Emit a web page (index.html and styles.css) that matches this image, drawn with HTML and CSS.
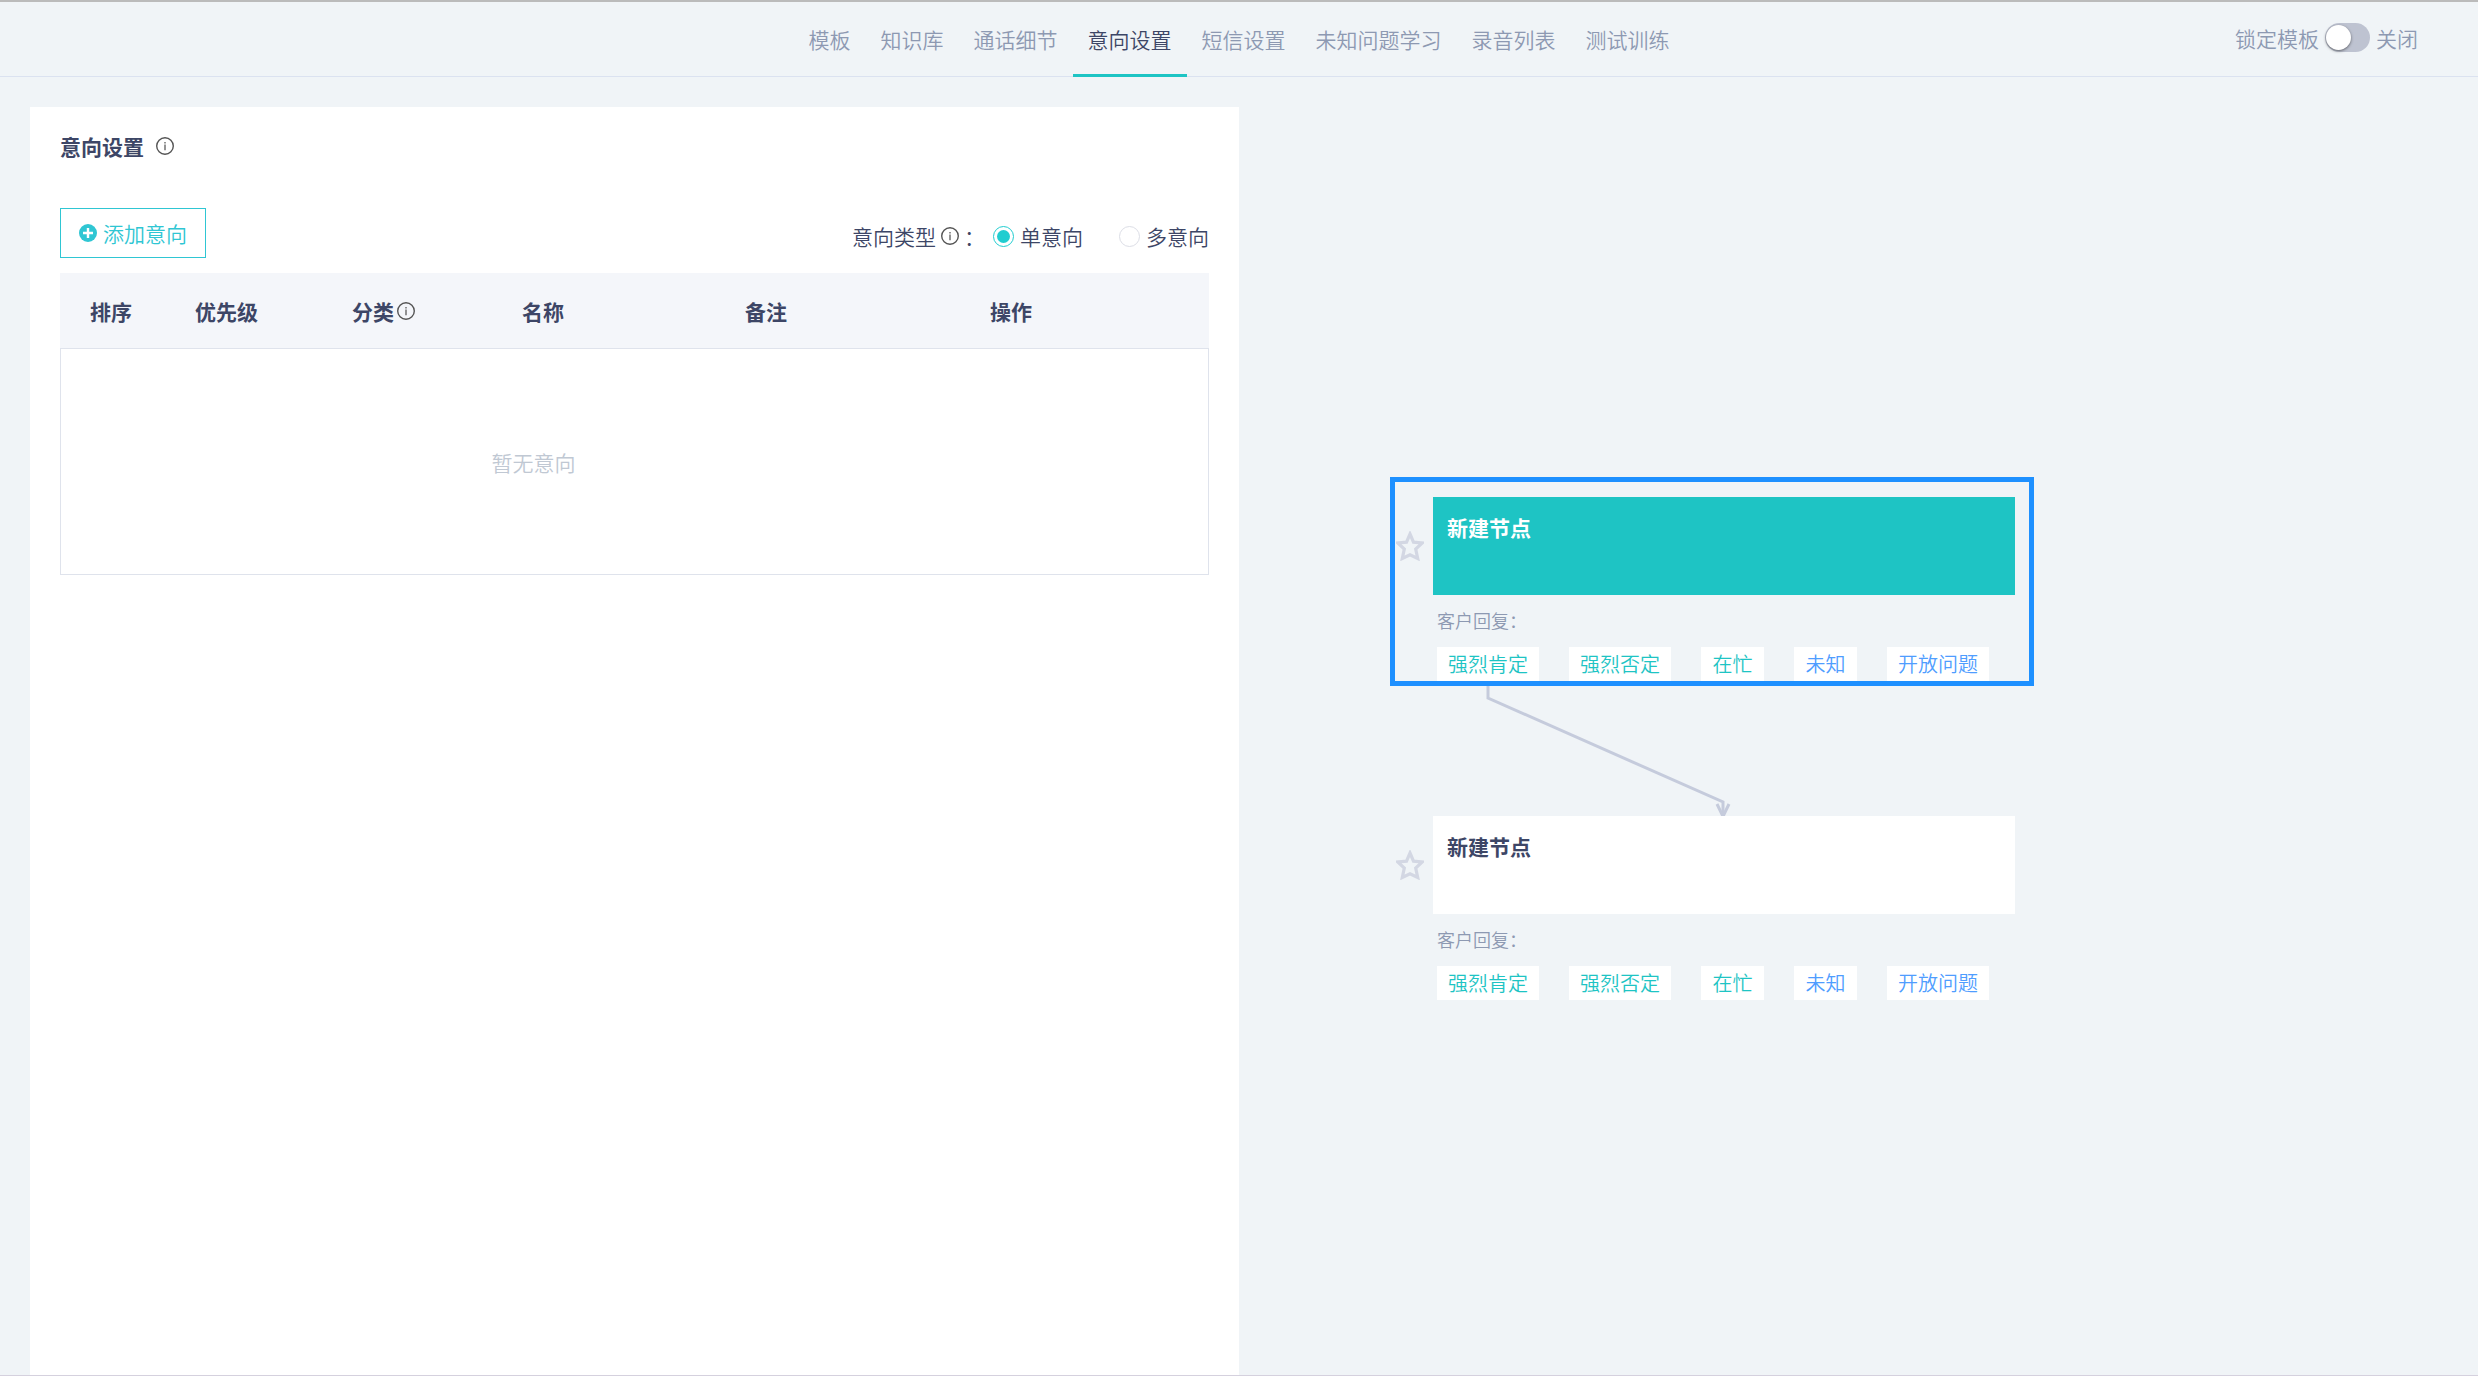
FILE: index.html
```html
<!DOCTYPE html>
<html lang="zh-CN">
<head>
<meta charset="utf-8">
<title>意向设置</title>
<link rel="stylesheet" href="styles.css">
</head>
<body>
<svg class="defs" aria-hidden="true">
  <symbol id="info" viewBox="0 0 18 18">
    <circle cx="9" cy="9" r="8.3" fill="none" stroke="#555" stroke-width="1.4"/>
    <path d="M9 7.6v5.6M9 5v1.4" stroke="#666" stroke-width="1.4"/>
  </symbol>
  <symbol id="star" viewBox="0 0 28 30">
    <path d="M14 3l3.500 8.200 8.700.800-6.500 6 2 9.500-7.700-3.700-7.700 3.700 2-9.500-6.500-6 8.700-.800z" fill="none" stroke="#d3d7e3" stroke-width="3.2"/>
  </symbol>
</svg>

<header class="topbar">
  <nav class="tabs">
    <a class="tab" href="#">模板</a>
    <a class="tab" href="#">知识库</a>
    <a class="tab" href="#">通话细节</a>
    <a class="tab tab-active" href="#">意向设置</a>
    <a class="tab" href="#">短信设置</a>
    <a class="tab" href="#">未知问题学习</a>
    <a class="tab" href="#">录音列表</a>
    <a class="tab" href="#">测试训练</a>
  </nav>
  <label class="lock">
    <span>锁定模板</span>
    <input class="switch" type="checkbox">
    <span>关闭</span>
  </label>
</header>

<main class="workspace">
  <section class="panel">
    <h1 class="panel-title">意向设置 <svg class="info"><use href="#info"/></svg></h1>
    <div class="toolbar">
      <button class="add" type="button">
        <svg class="info" viewBox="0 0 18 18"><circle cx="9" cy="9" r="9" fill="#2fc6d3"/><path d="M9 4v10M4 9h10" stroke="#fff" stroke-width="2.4"/></svg>
        添加意向
      </button>
      <div class="types" role="radiogroup" aria-labelledby="type-label">
        <span class="types-label" id="type-label">意向类型<svg class="info"><use href="#info"/></svg>：</span>
        <label class="choice"><input class="radio" type="radio" name="type" checked>单意向</label>
        <label class="choice"><input class="radio" type="radio" name="type">多意向</label>
      </div>
    </div>
    <table class="intents">
      <colgroup>
        <col class="col-order"><col class="col-priority"><col class="col-class"><col class="col-name"><col class="col-note"><col>
      </colgroup>
      <thead>
        <tr>
          <th>排序</th>
          <th>优先级</th>
          <th><span class="with-icon">分类<svg class="info"><use href="#info"/></svg></span></th>
          <th>名称</th>
          <th>备注</th>
          <th>操作</th>
        </tr>
      </thead>
      <tbody>
        <tr><td class="empty" colspan="6">暂无意向</td></tr>
      </tbody>
    </table>
  </section>

  <section class="canvas">
    <svg class="link" viewBox="0 0 260 140">
      <path d="M9 0v20l235 104v14" fill="none" stroke="#c5cbdc" stroke-width="3"/>
      <path d="M238 126l6 12.500 6-12.500" fill="none" stroke="#c5cbdc" stroke-width="3"/>
    </svg>

    <article class="node node-first">
      <svg class="star"><use href="#star"/></svg>
      <div class="node-box node-box-active">新建节点</div>
      <div class="replies">
        <p class="replies-label">客户回复：</p>
        <ul class="tags">
          <li class="tag">强烈肯定</li>
          <li class="tag">强烈否定</li>
          <li class="tag">在忙</li>
          <li class="tag tag-blue">未知</li>
          <li class="tag tag-blue">开放问题</li>
        </ul>
      </div>
    </article>

    <article class="node node-second">
      <svg class="star"><use href="#star"/></svg>
      <div class="node-box">新建节点</div>
      <div class="replies">
        <p class="replies-label">客户回复：</p>
        <ul class="tags">
          <li class="tag">强烈肯定</li>
          <li class="tag">强烈否定</li>
          <li class="tag">在忙</li>
          <li class="tag tag-blue">未知</li>
          <li class="tag tag-blue">开放问题</li>
        </ul>
      </div>
    </article>

    <div class="selection"></div>
  </section>
</main>
</body>
</html>
```

FILE: styles.css
```css
* {
  box-sizing: border-box;
}

body {
  margin: 0;
  min-height: 100vh;
  display: flex;
  flex-direction: column;
  background: #f0f4f7;
  border-bottom: 1px solid #d5d1de;
  color: #3d4666;
  font: 350 21px/30px "Noto Sans CJK SC", sans-serif;
}

.defs {
  position: absolute;
  width: 0;
  height: 0;
}

.topbar {
  display: grid;
  grid-template-columns: 1fr auto 1fr;
  height: 77px;
  border-top: 2px solid #bbb;
  border-bottom: 1px solid #dbe2f0;
  color: #8d99b2;
}

.tabs {
  grid-column: 2;
  display: flex;
  height: 75px;
}

.tab {
  display: flex;
  align-items: center;
  padding: 2px 15px 0;
  border-bottom: 3px solid transparent;
  color: inherit;
  text-decoration: none;
}

.tab-active {
  border-color: #1ec4c4;
  color: #3d4666;
}

.lock {
  display: flex;
  align-items: center;
  justify-self: end;
  gap: 6px;
  padding: 0 60px 4px 0;
}

.switch {
  appearance: none;
  width: 45px;
  height: 29px;
  margin: 0;
  padding: 2px 1px;
  border-radius: 15px;
  background: #bec3d1;
}

.switch::before {
  content: "";
  display: block;
  width: 25px;
  height: 25px;
  border-radius: 50%;
  background: #fff;
  box-shadow: 0 1px 3px rgba(0, 0, 0, 0.5);
}

.switch:checked {
  background: #1ec4c4;
}

.switch:checked::before {
  margin-left: auto;
}

.workspace {
  flex: 1;
  display: grid;
  grid-template-columns: 1fr 1fr;
}

.panel {
  margin: 30px 0 0 30px;
  padding: 24px 30px 30px;
  background: #fff;
}

.panel-title {
  display: flex;
  align-items: center;
  gap: 12px;
  margin: 0 0 47px;
  font-size: 21px;
  font-weight: 700;
}

.info {
  flex: none;
  width: 18px;
  height: 18px;
}

.toolbar {
  display: flex;
  justify-content: space-between;
  align-items: flex-end;
  margin-bottom: 15px;
}

.add {
  display: flex;
  align-items: center;
  gap: 6px;
  height: 50px;
  padding: 0 18px;
  border: 1px solid #2fc6d3;
  background: #fff;
  color: #2fc6d3;
  font: inherit;
}

.types {
  display: flex;
  align-items: center;
  gap: 36px;
  height: 44px;
}

.types-label {
  display: flex;
  align-items: center;
  margin-right: -28px;
}

.types-label .info {
  margin: 0 5px;
}

.choice {
  display: flex;
  align-items: center;
  gap: 6px;
}

.radio {
  appearance: none;
  width: 21px;
  height: 21px;
  margin: 0;
  border: 1px solid #dcdee6;
  border-radius: 50%;
}

.radio:checked {
  padding: 3px;
  border-color: #20cdd0;
  background: #20cdd0 content-box;
}

.intents {
  width: 100%;
  table-layout: fixed;
  border-collapse: separate;
  border-spacing: 0;
}

.col-order {
  width: 105px;
}

.col-priority {
  width: 157px;
}

.col-class {
  width: 170px;
}

.col-name {
  width: 223px;
}

.col-note {
  width: 245px;
}

.intents th {
  height: 75px;
  padding: 0 0 0 30px;
  background: #f4f6fa;
  text-align: left;
  font-weight: 700;
}

.with-icon {
  display: flex;
  align-items: center;
  gap: 3px;
}

.empty {
  height: 227px;
  padding: 0 202px 0 0;
  border: 1px solid #dfe3ec;
  color: #c0c8d3;
  text-align: center;
}

.canvas {
  position: relative;
}

.link {
  position: absolute;
  left: 240px;
  top: 601px;
  width: 260px;
  height: 140px;
}

.node {
  position: absolute;
  left: 157px;
  display: grid;
  grid-template-columns: 28px 582px;
  column-gap: 9px;
  align-items: center;
}

.node-first {
  top: 420px;
}

.node-second {
  top: 739px;
}

.star {
  width: 28px;
  height: 30px;
}

.node-box {
  height: 98px;
  padding: 15px 14px;
  background: #fff;
  font-weight: 700;
}

.node-box-active {
  background: #1ec4c4;
  color: #fff;
}

.replies {
  grid-column: 2;
  padding: 13px 4px 0;
}

.replies-label {
  margin: 0 0 15px;
  color: #8d99b2;
  font-size: 18px;
  line-height: 24px;
}

.tags {
  display: flex;
  gap: 30px;
  margin: 0;
  padding: 0;
  list-style: none;
}

.tag {
  min-width: 63px;
  padding: 0 11px;
  background: #fff;
  color: #1ec4c4;
  font-size: 20px;
  line-height: 34px;
  text-align: center;
}

.tag-blue {
  color: #4f9dff;
}

.selection {
  position: absolute;
  left: 151px;
  top: 400px;
  width: 644px;
  height: 209px;
  border: 5px solid #1e90ff;
  pointer-events: none;
}
```
